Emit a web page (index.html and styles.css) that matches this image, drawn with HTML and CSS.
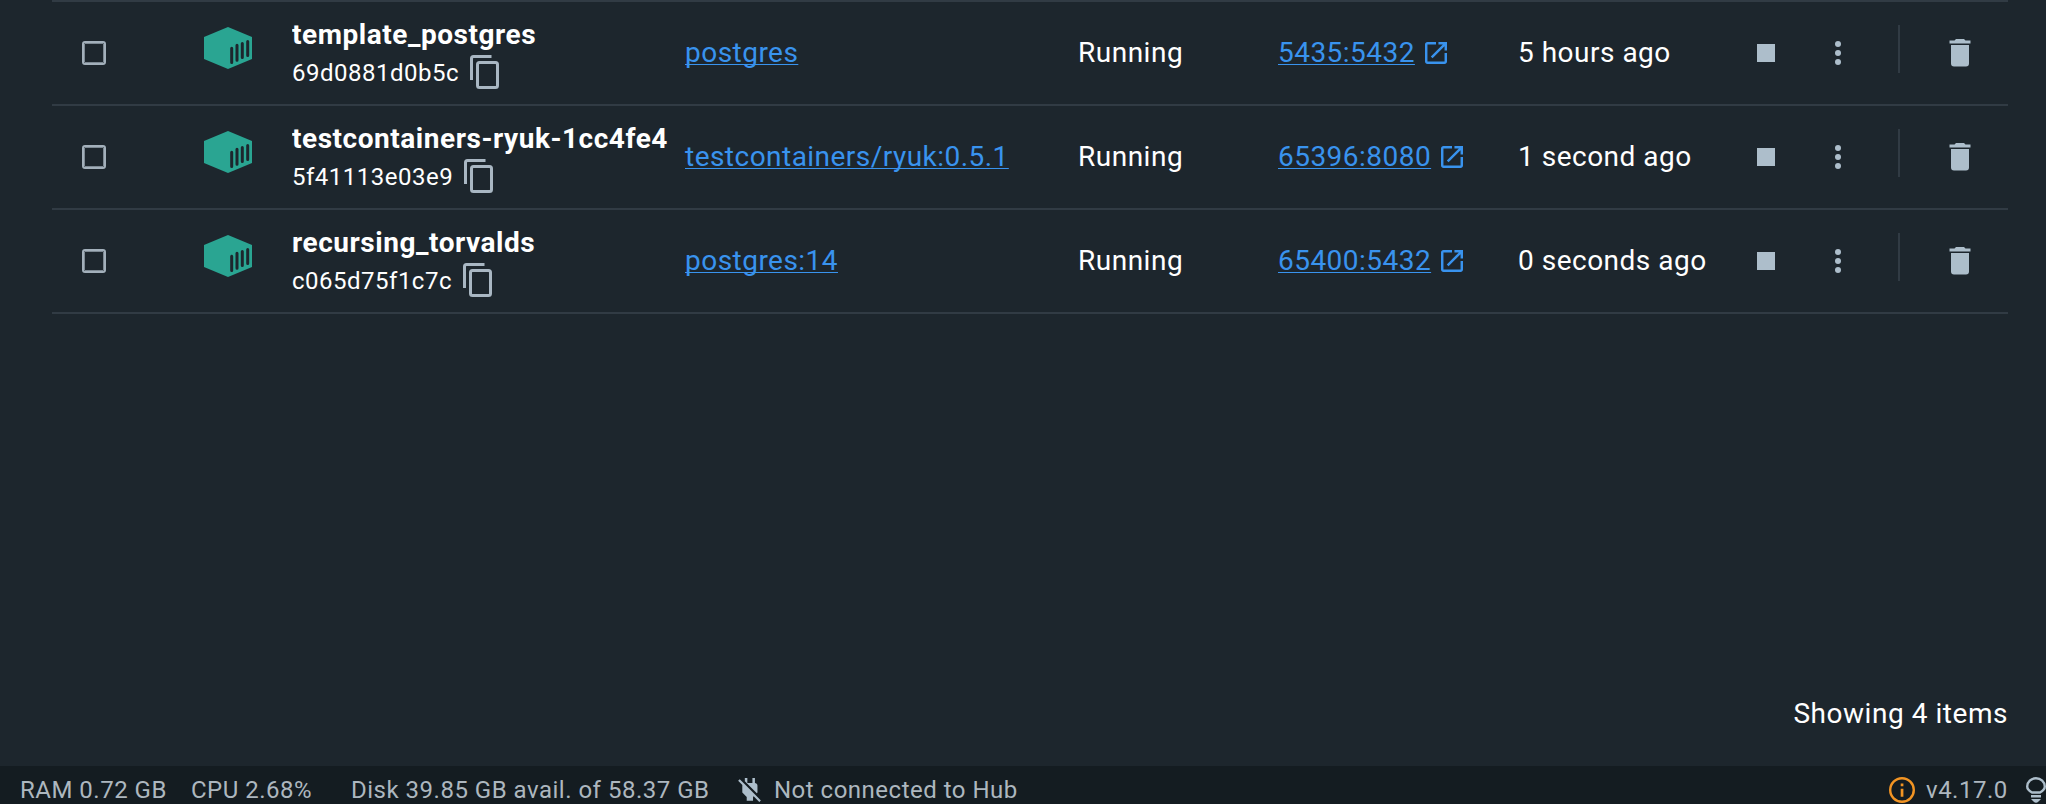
FILE: index.html
```html
<!DOCTYPE html>
<html lang="en">
<head>
<meta charset="utf-8">
<title>Containers</title>
<link rel="stylesheet" href="styles.css">
</head>
<body>
<svg class="defs" width="0" height="0">
  <symbol id="cube" viewBox="0 0 48 42"><path fill="#2aa592" d="M24 0 48 10V32L24 42 0 32V10Z"/><path stroke="#1d262d" stroke-width="3" stroke-linecap="round" d="M27.700 21.200V35.500M33 18.200V33.200M38.300 16.500V30.500M43.700 14.500V28.500"/></symbol>
  <symbol id="copy" viewBox="0 0 29 34"><path fill="none" stroke="#a9b7c3" stroke-width="3" d="M1.500 25V3.500Q1.500 1.500 3.500 1.500H21.500"/><rect x="7.500" y="7.500" width="20" height="25" rx="2" fill="none" stroke="#a9b7c3" stroke-width="3"/></symbol>
  <symbol id="open" viewBox="3 3 18 18"><path fill="#3993ee" d="M19 19H5V5h7V3H5c-1.110 0-2 .9-2 2v14c0 1.100.89 2 2 2h14c1.100 0 2-.9 2-2v-7h-2v7zM14 3v2h3.590l-9.830 9.830 1.410 1.410L19 6.410V10h2V3h-7z"/></symbol>
  <symbol id="trash" viewBox="0 0 22 28"><path fill="#adbecb" d="M7 0H15L16.500 1.500H21.500V4.500H.5V1.500H5.500ZM2 6H20V24.500Q20 27.500 17 27.500H5Q2 27.500 2 24.500Z"/></symbol>
</svg>
<main class="containers">
  <div class="row">
    <span class="checkbox"></span>
    <svg class="cube"><use href="#cube"/></svg>
    <div class="identity"><div class="name">template_postgres</div><div class="id">69d0881d0b5c<svg class="copy"><use href="#copy"/></svg></div></div>
    <div class="cell"><a class="link">postgres</a></div>
    <div class="cell">Running</div>
    <div class="cell"><a class="link">5435:5432</a><svg class="open"><use href="#open"/></svg></div>
    <div class="cell">5 hours ago</div>
    <span class="stop"></span>
    <span class="more"><i></i><i></i><i></i></span>
    <span class="divider"></span>
    <svg class="trash"><use href="#trash"/></svg>
  </div>
  <div class="row">
    <span class="checkbox"></span>
    <svg class="cube"><use href="#cube"/></svg>
    <div class="identity"><div class="name">testcontainers-ryuk-1cc4fe4</div><div class="id">5f41113e03e9<svg class="copy"><use href="#copy"/></svg></div></div>
    <div class="cell"><a class="link">testcontainers/ryuk:0.5.1</a></div>
    <div class="cell">Running</div>
    <div class="cell"><a class="link">65396:8080</a><svg class="open"><use href="#open"/></svg></div>
    <div class="cell">1 second ago</div>
    <span class="stop"></span>
    <span class="more"><i></i><i></i><i></i></span>
    <span class="divider"></span>
    <svg class="trash"><use href="#trash"/></svg>
  </div>
  <div class="row">
    <span class="checkbox"></span>
    <svg class="cube"><use href="#cube"/></svg>
    <div class="identity"><div class="name">recursing_torvalds</div><div class="id">c065d75f1c7c<svg class="copy"><use href="#copy"/></svg></div></div>
    <div class="cell"><a class="link">postgres:14</a></div>
    <div class="cell">Running</div>
    <div class="cell"><a class="link">65400:5432</a><svg class="open"><use href="#open"/></svg></div>
    <div class="cell">0 seconds ago</div>
    <span class="stop"></span>
    <span class="more"><i></i><i></i><i></i></span>
    <span class="divider"></span>
    <svg class="trash"><use href="#trash"/></svg>
  </div>
</main>
<div class="summary">Showing 4 items</div>
<footer class="status">
  <span class="ram">RAM 0.72 GB</span>
  <span class="cpu">CPU 2.68%</span>
  <span class="disk">Disk 39.85 GB avail. of 58.37 GB</span>
  <svg class="plug" viewBox="2.700 3 18 19"><path fill="#adbecb" d="M18 14.490V9c0-1-1.010-2.010-2-2V3h-2v4h-4V3H8v2.480l9.510 9.500.49-.49zm-1.760 1.770L7.200 7.200l-.01.010L3.980 4 2.710 5.250l3.360 3.360C6.040 8.740 6 8.870 6 9v5.480L9.500 18v3h5v-3l.48-.48L19.450 22l1.260-1.280-4.470-4.460z"/></svg>
  <span>Not connected to Hub</span>
  <svg class="info" viewBox="0 0 26 26"><circle cx="13" cy="13" r="11.800" fill="none" stroke="#f29423" stroke-width="2.400"/><path fill="#f29423" d="M11.700 6.500h2.700v2.700h-2.700zM11.700 11.700h2.700v8h-2.700z"/></svg>
  <span class="version">v4.17.0</span>
  <svg class="bulb" viewBox="0 0 20 26"><path fill="none" stroke="#adbecb" stroke-width="2.400" d="M6 15.500C2.800 13.800 1.200 12 1.200 9.500A8.800 8.300 0 0 1 18.800 9.500C18.800 12 17.200 13.800 14 15.500Z"/><path fill="#adbecb" d="M5 18H15V20.500H5ZM5 22H15L12.500 24.500Q10 27 7.500 24.500Z"/></svg>
</footer>
</body>
</html>
```
FILE: styles.css
```css
* { box-sizing: border-box; }
body {
  margin: 0;
  height: 804px;
  overflow: hidden;
  display: flex;
  flex-direction: column;
  background: #1d262d;
  color: #fff;
  font: 28px/40px Roboto, sans-serif;
  letter-spacing: 0.5px;
}
.defs { position: absolute; }
svg { display: block; flex: none; overflow: visible; }
.containers { margin: 0 38px 0 52px; border-top: 2px solid #313b44; }
.row {
  height: 104px;
  border-bottom: 2px solid #313b44;
  display: grid;
  grid-template-columns: 121px 119px 393px 393px 200px 240px 239px 78px 63px 51px 1fr;
  align-items: center;
  white-space: nowrap;
}
.checkbox { width: 24px; height: 24px; margin-left: 30px; border: 2.5px solid #a3b0bb; border-radius: 3px; outline: 0.5px solid #7d8993; outline-offset: -3px; }
.cube { width: 48px; height: 42px; margin: -10px 0 0 31px; }
.identity { height: 102px; padding-top: 14px; }
.name { width: 380px; overflow: hidden; line-height: 38px; font-weight: 700; letter-spacing: 0.54px; }
.id { display: flex; align-items: center; gap: 11px; line-height: 38px; font-size: 24px; }
.copy { width: 29px; height: 34px; margin-top: -2px; }
.cell { display: flex; align-items: center; }
.link { color: #3993ee; text-decoration: underline; text-decoration-thickness: 1px; text-underline-offset: 2px; text-decoration-skip-ink: none; letter-spacing: 0.47px; }
.open { width: 22px; height: 22px; margin-left: 10px; }
.stop { width: 18px; height: 18px; background: #adbecb; }
.more { display: grid; gap: 3px; }
.more i { width: 6px; height: 6px; border-radius: 50%; background: #adbecb; }
.divider { width: 2px; height: 48px; margin-top: -8px; background: #313b44; }
.trash { width: 22px; height: 28px; }
.summary { margin: auto 38px 32px auto; letter-spacing: 0.54px; }
.status {
  height: 38px;
  display: flex;
  padding-left: 20px;
  background: #141c21;
  color: #adb7bf;
  font-size: 24px;
  line-height: 49px;
  white-space: nowrap;
}
.ram { width: 171px; }
.cpu { width: 160px; }
.disk { width: 387px; }
.plug { width: 23px; height: 24px; margin: 12px 13px 0 0; }
.info { width: 26px; height: 26px; margin: 11px 11px 0 auto; }
.version { width: 100px; }
.bulb { width: 20px; height: 26px; margin-top: 11px; }
```
